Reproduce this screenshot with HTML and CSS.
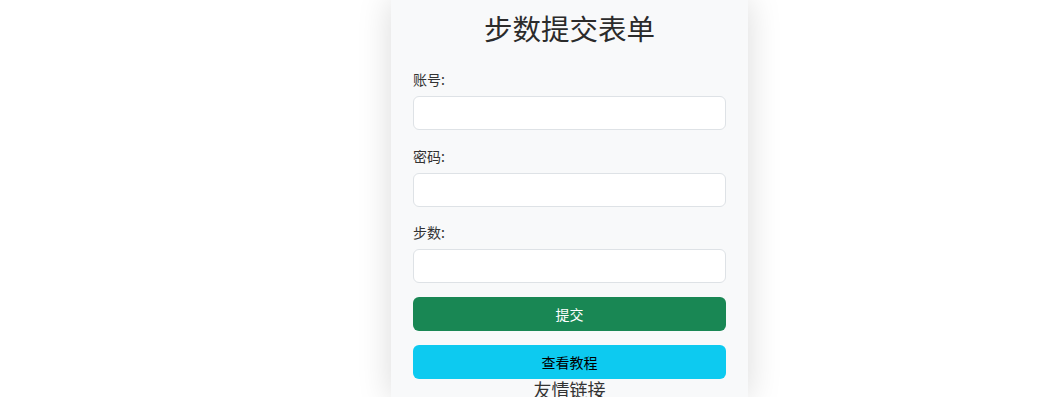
FILE: index.html
```html
<!DOCTYPE html>
<html lang="zh-CN">

<head>
    <meta charset="UTF-8">
    <meta name="viewport" content="width=device-width, initial-scale=1.0">
    <title>步数提交表单</title>
    <link rel="stylesheet" href="styles.css">
</head>

<body>
    <div class="card">
        <h2 class="title">步数提交表单</h2>

        <form id="stepForm">
            <div class="form-group">
                <label for="user">账号:</label>
                <input type="text" id="user" name="user">
            </div>

            <div class="form-group">
                <label for="password">密码:</label>
                <input type="password" id="password" name="password">
            </div>

            <div class="form-group">
                <label for="steps">步数:</label>
                <input type="number" id="steps" name="steps">
            </div>

            <button type="submit" class="btn btn-success">提交</button>
            <button type="button" class="btn btn-info">查看教程</button>
        </form>

        <div class="links">友情链接</div>
    </div>
</body>

</html>
```

FILE: styles.css
```css
body {
    font-family: "Noto Sans CJK SC", "Liberation Sans", sans-serif;
    margin: 0;
    padding: 0;
    background-color: #fff;
    color: #212529;
}

.card {
    width: 357px;
    box-sizing: border-box;
    margin-left: 391px;
    padding: 11px 22px 0;
    background-color: #f8f9fa;
    box-shadow: 0 0 32px rgba(0, 0, 0, 0.15);
    min-height: 397px;
}

.title {
    margin: 0 0 24px;
    font-size: 28.5px;
    font-weight: 400;
    line-height: 34px;
    text-align: center;
    color: #2b2b2b;
}

.form-group {
    margin-bottom: 15.5px;
}

.form-group label {
    display: block;
    font-size: 14px;
    line-height: 21px;
    margin-bottom: 6px;
    color: #333;
}

.form-group input {
    display: block;
    width: 100%;
    height: 34px;
    padding: 6px 12px;
    border: 1px solid #dee2e6;
    border-radius: 6px;
    box-sizing: border-box;
    font-size: 14px;
    background-color: #fff;
}

.btn {
    display: block;
    width: 100%;
    height: 34px;
    border: none;
    border-radius: 6px;
    font-family: inherit;
    font-size: 14px;
    cursor: pointer;
}

.btn-success {
    background-color: #198754;
    color: #fff;
    margin-top: -1.5px;
    margin-bottom: 14px;
}

.btn-info {
    background-color: #0dcaf0;
    color: #000;
}

.links {
    text-align: center;
    font-size: 18px;
    line-height: 20px;
    color: #333;
}
```
